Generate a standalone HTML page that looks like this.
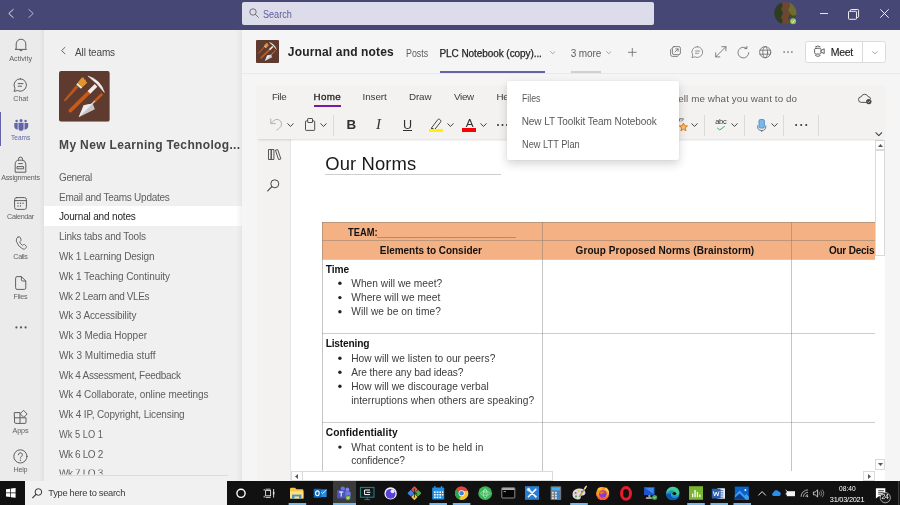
<!DOCTYPE html>
<html lang="en"><head><meta charset="utf-8"><title>Journal and notes | Microsoft Teams</title>
<style>
*{box-sizing:border-box;margin:0;padding:0}
html,body{width:900px;height:505px;overflow:hidden;background:#f5f5f5;font-family:"Liberation Sans",sans-serif}
.a{position:absolute}
.t{position:absolute;line-height:1;white-space:nowrap}
.tl{position:absolute;left:0;top:0;width:900px;height:505px;will-change:transform;pointer-events:none}
svg{position:absolute;overflow:visible}
.ic{fill:none;stroke:#5f5f5f;stroke-width:1;stroke-linecap:round;stroke-linejoin:round}
.hi .ic{stroke:#6e6e6e;stroke-width:0.85}
</style></head><body>
<svg width="0" height="0" style="display:none"><defs>
<symbol id="tools" viewBox="0 0 51 51">
<rect width="51" height="51" rx="2.2" fill="#5f3a2f"/>
<path d="M5.2 29.4 L17.4 14.6 L19.2 16.3 L6.4 30.0 Z" fill="#b9561d" stroke="#b9561d" stroke-width="1" stroke-linejoin="round"/>
<polygon points="18.68,11.83 23.58,16.39 28.56,11.66 26.88,10.46 27.00,8.90 25.20,8.54 24.96,6.86 22.92,6.62" fill="#e2932e"/>
<polygon points="22.04,17.84 23.45,16.33 18.76,11.96 17.35,13.47" fill="#f3ebe2"/>
<line x1="11.4" y1="39.8" x2="30.6" y2="21" stroke="#c45a1b" stroke-width="3.7" stroke-linecap="round"/>
<line x1="30.1" y1="21.5" x2="37.2" y2="14.4" stroke="#f3eee9" stroke-width="3.7"/>
<path d="M29.1 5.1 Q41.5 8.5 45.6 21.6 Q38.2 12 29.1 5.1 Z" fill="#f5f1ee" stroke="#f5f1ee" stroke-width="0.5" stroke-linejoin="round"/>
<line x1="36.2" y1="30" x2="42.8" y2="23.6" stroke="#c45a1b" stroke-width="2.5" stroke-linecap="round"/>
<line x1="32.8" y1="33.4" x2="36" y2="30.2" stroke="#d6d6d6" stroke-width="1.3"/>
<path d="M19.8 46.5 L24.8 34.4 L33.8 32.6 L36 38.4 Z" fill="#c6c6c6"/>
<path d="M19.8 46.5 L24.8 34.4 L33.8 32.6 Z" fill="#ececec"/>
</symbol>
<symbol id="chev" viewBox="0 0 8 5"><path d="M0.6 0.7 L4 4.1 L7.4 0.7" fill="none" stroke="#3a3a3a" stroke-width="1.15" stroke-linecap="round" stroke-linejoin="round"/></symbol>
<symbol id="chevl" viewBox="0 0 8 5"><path d="M0.6 0.7 L4 4.1 L7.4 0.7" fill="none" stroke="#7c7c7c" stroke-width="0.95" stroke-linecap="round" stroke-linejoin="round"/></symbol>
</defs></svg>

<!-- ================= TITLE BAR ================= -->
<div class="a" style="left:0;top:0;width:900px;height:30px;background:#464775"></div>
<svg style="left:7.6px;top:9.3px" width="6" height="9" viewBox="0 0 6 9"><path d="M5.2 0.5 L0.8 4.5 L5.2 8.5" fill="none" stroke="#ececf4" stroke-width="0.95" stroke-linecap="round" stroke-linejoin="round"/></svg>
<svg style="left:28.4px;top:9.3px" width="6" height="9" viewBox="0 0 6 9"><path d="M0.8 0.5 L5.2 4.5 L0.8 8.5" fill="none" stroke="#b9b9d3" stroke-width="1" stroke-linecap="round" stroke-linejoin="round"/></svg>
<div class="a" style="left:242.2px;top:2.2px;width:412.3px;height:22.6px;background:#dcdcea;border-radius:2px"></div>
<svg style="left:248.5px;top:8.3px" width="10" height="10" viewBox="0 0 10 10"><circle cx="4" cy="4" r="3.2" fill="none" stroke="#666" stroke-width="0.9"/><line x1="6.4" y1="6.4" x2="9.4" y2="9.4" stroke="#666" stroke-width="0.9" stroke-linecap="round"/></svg>
<!-- avatar -->
<svg style="left:774.3px;top:2.2px" width="23" height="23" viewBox="0 0 23 23">
<defs><clipPath id="avc"><circle cx="11.3" cy="11.1" r="11.1"/></clipPath><filter id="avb" x="-20%" y="-20%" width="140%" height="140%"><feGaussianBlur stdDeviation="0.7"/></filter></defs>
<g clip-path="url(#avc)"><g filter="url(#avb)">
<rect x="-3" y="-3" width="29" height="29" fill="#3b4527"/>
<rect x="0" y="0" width="8" height="23" fill="#2f3d22"/>
<path d="M7 0 L15 0 L16 4 L14 8 L16.5 12 L14 16 L16 20 L15 23 L7 23 L9 19 L7 15 L9.5 11 L7 7 L9 3 Z" fill="#6e4632"/>
<path d="M15 0 L23 0 L23 14 L19 15 L16.5 12 L14 8 L16 4 Z" fill="#6f6d2c"/>
<path d="M16 14 L23 13 L23 23 L15 23 L16 20 L14.5 17 Z" fill="#4a4a25"/>
</g></g>
<circle cx="19.1" cy="19.3" r="4.1" fill="#464775"/>
<circle cx="19.1" cy="19.3" r="3" fill="#92c353"/>
<path d="M17.7 19.4 L18.7 20.4 L20.6 18.3" fill="none" stroke="#fff" stroke-width="0.8"/>
</svg>
<!-- window controls -->
<div class="a" style="left:819.6px;top:12.8px;width:8px;height:1px;background:#e6e6ef"></div>
<svg style="left:847.8px;top:8.5px" width="11.2" height="11" viewBox="0 0 11.2 11"><rect x="0.5" y="2.3" width="8" height="8" rx="0.8" fill="none" stroke="#fff" stroke-width="0.9"/><path d="M2.5 2.3 V1.3 Q2.5 0.5 3.3 0.5 H9.8 Q10.6 0.5 10.6 1.3 V7.6 Q10.6 8.4 9.8 8.4 H8.6" fill="none" stroke="#fff" stroke-width="0.9"/></svg>
<svg style="left:880px;top:9.2px" width="9" height="9" viewBox="0 0 9 9"><path d="M0.3 0.3 L8.7 8.7 M8.7 0.3 L0.3 8.7" stroke="#fff" stroke-width="0.9"/></svg>

<!-- ================= RAIL ================= -->
<div class="a" style="left:0;top:30px;width:44px;height:451px;background:linear-gradient(90deg,#ebebeb 0,#ebebeb 39px,#e1e1e1 44px)"></div>
<div class="a" style="left:0;top:112px;width:1.3px;height:33.5px;background:#6264a7"></div>
<!-- bell -->
<svg style="left:14px;top:38px" width="14" height="15" viewBox="0 0 14 15"><path class="ic" d="M2.2 10.6 V6 A4.8 4.8 0 0 1 11.8 6 V10.6 L12.6 11.4 H1.4 Z"/><path class="ic" d="M5.3 11.6 A1.8 1.8 0 0 0 8.7 11.6"/></svg>
<!-- chat -->
<svg style="left:13.4px;top:78px" width="15" height="15" viewBox="0 0 15 15"><path class="ic" d="M7.6 0.8 A6.2 6.2 0 1 1 4.4 12.5 L1.1 13.4 L2 10.3 A6.2 6.2 0 0 1 7.6 0.8 Z"/><path class="ic" d="M5.2 5.6 H10 M5.2 8.2 H8.6"/></svg>
<!-- teams -->
<svg style="left:13.5px;top:118.6px" width="14.4" height="12" viewBox="0 0 14.4 12"><g fill="#6264a7"><circle cx="2.6" cy="2.05" r="1.25"/><circle cx="7.05" cy="1.6" r="1.5"/><circle cx="11.6" cy="2.05" r="1.25"/><path d="M4.5 3.7 H9.6 V9.2 A2.55 2.55 0 0 1 4.5 9.2 Z"/><path d="M0.3 4 H3.7 V10.7 Q0.3 10.1 0.3 7.2 Z"/><path d="M14.2 4 H10.5 V10.7 Q14.2 10.1 14.2 7.2 Z"/></g></svg>
<!-- assignments backpack -->
<svg style="left:13.9px;top:156.5px" width="13" height="16" viewBox="0 0 13 16"><path class="ic" d="M4.4 3.2 V2.2 A2.1 2.1 0 0 1 8.6 2.2 V3.2"/><path class="ic" d="M1.2 14.8 V7.2 A4 4 0 0 1 5.2 3.2 H7.8 A4 4 0 0 1 11.8 7.2 V14.8 Z"/><path class="ic" d="M3.4 9.6 H9.6 V11.8 H3.4 Z M4.6 6.6 H8.4"/></svg>
<!-- calendar -->
<svg style="left:14.3px;top:197px" width="13" height="13" viewBox="0 0 13 13"><rect class="ic" x="0.6" y="0.6" width="11.8" height="11.8" rx="2"/><path class="ic" d="M0.6 3.6 H12.4"/><g fill="#5f5f5f"><circle cx="4" cy="6.3" r="0.75"/><circle cx="6.5" cy="6.3" r="0.75"/><circle cx="9" cy="6.3" r="0.75"/><circle cx="4" cy="8.9" r="0.75"/><circle cx="6.5" cy="8.9" r="0.75"/></g></svg>
<!-- calls -->
<svg style="left:14.6px;top:235.6px" width="12" height="14.4" viewBox="0 0 13 15"><path class="ic" d="M3.2 0.9 L4.6 0.6 Q5.4 0.5 5.7 1.3 L6.6 3.8 Q6.8 4.5 6.2 5 L5 6 Q5.8 8.4 8 9.8 L9.3 9 Q10 8.6 10.6 9.1 L12.2 10.7 Q12.7 11.3 12.2 12 L11.4 13.2 Q10.4 14.5 8.6 13.8 Q3.4 11.6 1.4 5.2 Q0.8 2 3.2 0.9 Z"/></svg>
<!-- files -->
<svg style="left:15.2px;top:276.2px" width="11.4" height="14" viewBox="0 0 11.4 14"><path class="ic" d="M0.6 2 A1.4 1.4 0 0 1 2 0.6 H6.4 L10.8 5 V12 A1.4 1.4 0 0 1 9.4 13.4 H2 A1.4 1.4 0 0 1 0.6 12 Z"/><path class="ic" d="M6.4 0.8 V3.8 A1.2 1.2 0 0 0 7.6 5 H10.6"/></svg>
<!-- more -->
<svg style="left:15px;top:326px" width="12" height="3" viewBox="0 0 12 3"><g fill="#555"><circle cx="1.4" cy="1.4" r="1.05"/><circle cx="6" cy="1.4" r="1.05"/><circle cx="10.6" cy="1.4" r="1.05"/></g></svg>
<!-- apps -->
<svg style="left:14px;top:409.5px" width="14" height="14" viewBox="0 0 14 14"><path class="ic" d="M0.6 2.6 H6 V13.4 H1.6 A1 1 0 0 1 0.6 12.4 Z M0.6 7.8 H12 V12.4 A1 1 0 0 1 11 13.4 H6"/><path class="ic" d="M9.8 0.6 L13.2 4 L9.8 7.4 L6.4 4 Z" /></svg>
<!-- help -->
<svg style="left:12.9px;top:449.3px" width="15" height="15" viewBox="0 0 15 15"><circle class="ic" cx="7.4" cy="7.4" r="6.6"/><path class="ic" d="M5.4 5.8 A2 2 0 1 1 8.2 7.6 Q7.4 8.2 7.4 9.2"/><circle cx="7.4" cy="11.2" r="0.7" fill="#5f5f5f"/></svg>

<!-- ================= CHANNEL PANEL ================= -->
<div class="a" style="left:44px;top:30px;width:197.7px;height:451px;background:linear-gradient(90deg,#f0f0f0 0,#f0f0f0 192px,#e6e6e6 197.7px)"></div>
<div class="a" style="left:44px;top:206px;width:197.7px;height:19.5px;background:linear-gradient(90deg,#fff 0,#fff 192px,#f2f2f2 197.7px)"></div>
<svg style="left:61px;top:47.2px" width="4.4" height="7.2" viewBox="0 0 4.4 7.2"><path d="M3.9 0.4 L0.6 3.6 L3.9 6.8" fill="none" stroke="#555" stroke-width="0.9" stroke-linecap="round" stroke-linejoin="round"/></svg>
<svg style="left:58.9px;top:71px" width="50.8" height="50.8"><use href="#tools"/></svg>
<div class="a" style="left:59px;top:474.6px;width:169px;height:1px;background:#dcdcdc"></div>
<div class="a" style="left:44px;top:475.6px;width:192px;height:5.4px;background:#f0f0f0"></div>

<!-- ================= HEADER ================= -->
<div class="a" style="left:241.7px;top:30px;width:658.3px;height:43.6px;background:#f5f5f5;border-bottom:1px solid #e9e9e9"></div>
<svg style="left:256.2px;top:40px" width="23" height="23"><use href="#tools"/></svg>
<div class="a" style="left:439.5px;top:70.6px;width:105.5px;height:2.2px;background:#6264a7"></div>
<div class="a" style="left:570.8px;top:70.6px;width:30.4px;height:2.2px;background:#d0d0d0"></div>
<svg style="left:550px;top:51.4px" width="5.6" height="3.4" viewBox="0 0 8 5"><use href="#chevl"/></svg>
<svg style="left:605.8px;top:51.4px" width="5.6" height="3.4" viewBox="0 0 8 5"><use href="#chevl"/></svg>
<svg style="left:628px;top:47.8px" width="8.6" height="8.6" viewBox="0 0 8.6 8.6"><path d="M4.3 0 V8.6 M0 4.3 H8.6" stroke="#666" stroke-width="0.8"/></svg>
<!-- header icons -->
<svg class="hi" style="left:669.8px;top:46.4px" width="11" height="11" viewBox="0 0 11 11"><rect class="ic" x="2.4" y="0.6" width="8" height="8" rx="1.6"/><path class="ic" d="M1.2 2.6 Q0.6 3 0.6 3.8 V8.6 A1.8 1.8 0 0 0 2.4 10.4 H7.2 Q8 10.4 8.4 9.8"/><path class="ic" d="M5 6 L8 3 M5.8 2.9 H8.1 V5.2"/></svg>
<svg class="hi" style="left:691.4px;top:45.6px" width="13" height="13" viewBox="0 0 15 15"><path class="ic" d="M7.6 0.8 A6.2 6.2 0 1 1 4.4 12.5 L1.1 13.4 L2 10.3 A6.2 6.2 0 0 1 7.6 0.8 Z"/><path class="ic" d="M5.2 5.8 H10 M5.2 8.4 H8.6"/></svg>
<svg class="hi" style="left:714.6px;top:46.2px" width="11.6" height="11.6" viewBox="0 0 11.6 11.6"><path class="ic" d="M0.7 10.9 L10.9 0.7 M6.8 0.7 H10.9 V4.8 M0.7 6.8 V10.9 H4.8"/></svg>
<svg class="hi" style="left:736.6px;top:45.6px" width="13" height="13" viewBox="0 0 13 13"><path class="ic" d="M11.8 6.6 A5.4 5.4 0 1 1 9.6 2.2"/><path class="ic" d="M9.9 0.4 V2.6 H7.7"/></svg>
<svg class="hi" style="left:759.4px;top:45.8px" width="12.4" height="12.4" viewBox="0 0 12.4 12.4"><circle class="ic" cx="6.2" cy="6.2" r="5.6"/><ellipse class="ic" cx="6.2" cy="6.2" rx="2.4" ry="5.6"/><path class="ic" d="M1 4.2 H11.4 M1 8.2 H11.4"/></svg>
<svg class="hi" style="left:783.4px;top:51px" width="10" height="2.2" viewBox="0 0 10 2.2"><g fill="#5f5f5f"><circle cx="1.1" cy="1.1" r="0.8"/><circle cx="5" cy="1.1" r="0.8"/><circle cx="8.9" cy="1.1" r="0.8"/></g></svg>
<!-- meet -->
<div class="a" style="left:805.3px;top:40.6px;width:80.7px;height:22.3px;background:#fff;border:1px solid #dbdbdb;border-radius:2.5px"></div>
<div class="a" style="left:862.4px;top:40.6px;width:1px;height:22.3px;background:#dbdbdb"></div>
<svg style="left:813.8px;top:45.4px" width="11" height="12.2" viewBox="0 0 11 12.2"><rect class="ic" x="0.6" y="3.3" width="6.4" height="5.8" rx="1.4" stroke="#3a3a3a"/><path class="ic" d="M7.2 5.3 L10.2 3.8 V8.6 L7.2 7.1" stroke="#3a3a3a"/><path class="ic" d="M1.5 1.7 Q3.8 0 6.1 1.7 M1.5 10.7 Q3.8 12.4 6.1 10.7" stroke="#3a3a3a" stroke-width="0.85"/></svg>
<svg style="left:871.8px;top:50.6px" width="5.8" height="3.6" viewBox="0 0 8 5"><use href="#chevl"/></svg>

<!-- ================= ONENOTE ================= -->
<div class="a" style="left:256.6px;top:85.4px;width:628.8px;height:395.6px;background:#fff"></div>
<div class="a" style="left:256.6px;top:85.4px;width:628.8px;height:53.7px;background:#f3f2f1;box-shadow:0 2px 2px -1px rgba(0,0,0,.14);z-index:2"></div>
<div class="a" style="left:256.6px;top:139.1px;width:34px;height:341.9px;background:#f3f2f1;border-right:1px solid #e6e5e4"></div>
<div class="a" style="left:313.6px;top:105px;width:27px;height:2px;background:#7719aa;z-index:3"></div>
<div style="position:absolute;left:0;top:0;z-index:3">
<!-- undo -->
<svg style="left:270.3px;top:118.2px" width="13" height="12.6" viewBox="0 0 13 12.6"><path d="M0.8 1 V5.6 H5.4 M1 5.4 L3.6 2.9 A4.6 4.6 0 0 1 11.6 6 Q11.6 8.6 8.8 10.6 L6.8 12" fill="none" stroke="#b3b0ad" stroke-width="1" stroke-linecap="round" stroke-linejoin="round"/></svg>
<svg style="left:286.6px;top:122.8px" width="7" height="4.2" viewBox="0 0 8 5"><use href="#chev"/></svg>
<!-- clipboard -->
<svg style="left:304.8px;top:118.2px" width="10.2" height="13" viewBox="0 0 10.2 13"><rect x="0.5" y="2.9" width="9.2" height="9.5" rx="0.7" fill="none" stroke="#444" stroke-width="0.95"/><rect x="2.7" y="0.5" width="4.8" height="4" rx="0.5" fill="#f3f2f1" stroke="#444" stroke-width="0.95"/></svg>
<svg style="left:320.4px;top:122.8px" width="7" height="4.2" viewBox="0 0 8 5"><use href="#chev"/></svg>
<div class="a" style="left:333px;top:114.5px;width:1px;height:21px;background:#dddbd9"></div>
<!-- U underline -->
<div class="a" style="left:402.8px;top:130.3px;width:8.8px;height:0.9px;background:#323130"></div>
<!-- highlighter -->
<svg style="left:428.8px;top:117.6px" width="13.4" height="14" viewBox="0 0 13.4 14"><path d="M2.6 9.8 L8.8 1.6 Q9.6 0.8 10.6 1.4 L11.6 2.2 Q12.4 3 11.8 3.8 L5.6 11.6 L2.2 11.8 Z M2.4 10 L5.4 11.4 M2.2 11.6 L1.2 11.8" fill="none" stroke="#333" stroke-width="0.9" stroke-linejoin="round"/></svg>
<svg style="left:446.5px;top:122.8px" width="7" height="4.2" viewBox="0 0 8 5"><use href="#chev"/></svg>
<div class="a" style="left:428.6px;top:129.3px;width:14.3px;height:2.3px;background:#fff100"></div>
<!-- A red bar -->
<div class="a" style="left:462.3px;top:128px;width:14.1px;height:3.6px;background:#fb0007"></div>
<svg style="left:480.2px;top:122.8px" width="7" height="4.2" viewBox="0 0 8 5"><use href="#chev"/></svg>
<svg style="left:496.9px;top:123.6px" width="11" height="2.2" viewBox="0 0 11 2.2"><g fill="#333"><circle cx="1" cy="1.1" r="1"/><circle cx="5.5" cy="1.1" r="1"/><circle cx="10" cy="1.1" r="1"/></g></svg>
<!-- star item -->
<svg style="left:0;top:0" width="900" height="505"><path d="M679.6 121.4 V118.8 H683.6 M681 121.6 L683.4 119.2" fill="none" stroke="#555" stroke-width="0.8"/><polygon points="683.40,123.00 684.52,125.76 687.49,125.97 685.21,127.89 685.93,130.78 683.40,129.20 680.87,130.78 681.59,127.89 679.31,125.97 682.28,125.76" fill="#f9c27a" stroke="#e37c0c" stroke-width="1" stroke-linejoin="round"/></svg>
<svg style="left:690.6px;top:122.8px" width="7" height="4.2" viewBox="0 0 8 5"><use href="#chev"/></svg>
<div class="a" style="left:703.8px;top:114.5px;width:1px;height:21px;background:#dddbd9"></div>
<svg style="left:716.5px;top:125.8px" width="8" height="4.4" viewBox="0 0 8 4.4"><path d="M0.5 2.2 L2.8 3.9 L7.5 0.5" fill="none" stroke="#2da44e" stroke-width="0.9" stroke-linecap="round" stroke-linejoin="round"/></svg>
<svg style="left:731.4px;top:122.8px" width="7" height="4.2" viewBox="0 0 8 5"><use href="#chev"/></svg>
<div class="a" style="left:743.6px;top:114.5px;width:1px;height:21px;background:#dddbd9"></div>
<!-- mic -->
<svg style="left:756.6px;top:118.6px" width="9.4" height="13" viewBox="0 0 9.4 13"><rect x="2" y="0.5" width="5.4" height="8.6" rx="1.4" fill="#7db7e8" stroke="#3a86d6" stroke-width="0.8"/><path d="M0.6 6.8 V7.4 A4.1 4.1 0 0 0 8.8 7.4 V6.8 M4.7 11.6 V12.6" fill="none" stroke="#666" stroke-width="0.9" stroke-linecap="round"/></svg>
<svg style="left:771.2px;top:122.8px" width="7" height="4.2" viewBox="0 0 8 5"><use href="#chev"/></svg>
<div class="a" style="left:783.3px;top:114.5px;width:1px;height:21px;background:#dddbd9"></div>
<svg style="left:794.6px;top:123.5px" width="12.4" height="2.2" viewBox="0 0 12.4 2.2"><g fill="#333"><circle cx="1.1" cy="1.1" r="1"/><circle cx="6.2" cy="1.1" r="1"/><circle cx="11.3" cy="1.1" r="1"/></g></svg>
<div class="a" style="left:818px;top:114.5px;width:1px;height:21px;background:#dddbd9"></div>
<svg style="left:874.8px;top:131.6px" width="7.6" height="4.4" viewBox="0 0 8 5"><use href="#chev"/></svg>
<!-- cloud -->
<svg style="left:857.6px;top:94px" width="14" height="10.6" viewBox="0 0 14 10.6"><path d="M8 8.4 H3.4 A2.8 2.8 0 0 1 3.2 2.8 A3.6 3.6 0 0 1 10 2.6 A2.6 2.6 0 0 1 12.6 4.6" fill="none" stroke="#444" stroke-width="0.9" stroke-linecap="round"/><circle cx="10.8" cy="7.6" r="2.7" fill="#444"/><path d="M9.6 7.6 L10.5 8.5 L12 6.8" fill="none" stroke="#f3f2f1" stroke-width="0.7"/></svg>
</div>
<!-- left nav icons -->
<svg style="left:268px;top:149px" width="13.4" height="11" viewBox="0 0 13.4 11"><path d="M0.5 0.5 H3.2 V10.5 H0.5 Z M3.2 0.5 H5.9 V10.5 H3.2 Z M7.4 1.2 L9.7 0.6 L12.9 9.9 L10.6 10.6 Z" fill="none" stroke="#444" stroke-width="0.9" stroke-linejoin="round"/></svg>
<svg style="left:267.2px;top:179.2px" width="12.6" height="12.6" viewBox="0 0 12.6 12.6"><circle cx="7.8" cy="4.8" r="4" fill="none" stroke="#444" stroke-width="1"/><line x1="4.9" y1="7.7" x2="0.7" y2="11.9" stroke="#444" stroke-width="1.1" stroke-linecap="round"/></svg>

<!-- document -->
<div class="a" style="left:325.2px;top:173.7px;width:176px;height:1px;background:rgba(110,110,110,.34)"></div>
<div class="a" style="left:322.3px;top:222.4px;width:553px;height:248.4px;overflow:hidden">
 <div class="a" style="left:0;top:0;width:560px;height:36.9px;background:#f4b183"></div>
 <div class="a" style="left:0;top:0;width:560px;height:1px;background:rgba(110,110,110,.40)"></div>
 <div class="a" style="left:0;top:17.9px;width:560px;height:1px;background:rgba(110,110,110,.40)"></div>
 <div class="a" style="left:0;top:36.4px;width:560px;height:1px;background:rgba(110,110,110,.36)"></div>
 <div class="a" style="left:0;top:110.6px;width:560px;height:1px;background:rgba(110,110,110,.34)"></div>
 <div class="a" style="left:0;top:199.4px;width:560px;height:1px;background:rgba(110,110,110,.34)"></div>
 <div class="a" style="left:0;top:0;width:1px;height:260px;background:rgba(110,110,110,.40)"></div>
 <div class="a" style="left:220.2px;top:0;width:1px;height:260px;background:rgba(110,110,110,.40)"></div>
 <div class="a" style="left:468.6px;top:0;width:1px;height:260px;background:rgba(110,110,110,.40)"></div>
</div>
<svg style="left:0;top:0" width="900" height="505"><g fill="#222">
<circle cx="339.9" cy="283.3" r="1.7"/><circle cx="339.9" cy="297.6" r="1.7"/><circle cx="339.9" cy="311.8" r="1.7"/>
<circle cx="339.9" cy="358.3" r="1.7"/><circle cx="339.9" cy="372.2" r="1.7"/><circle cx="339.9" cy="386.2" r="1.7"/>
<circle cx="339.9" cy="447.1" r="1.7"/></g></svg>
<!-- v scrollbar -->
<div class="a" style="left:875.2px;top:139.1px;width:10.2px;height:331.6px;background:#fff"></div>
<div class="a" style="left:875.2px;top:140.4px;width:10.2px;height:9.8px;background:#fdfdfd;border:1px solid #dadada"></div>
<svg style="left:878px;top:143.6px" width="5" height="3" viewBox="0 0 5 3"><path d="M0 3 L2.5 0 L5 3 Z" fill="#555"/></svg>
<div class="a" style="left:875.2px;top:149.6px;width:10.2px;height:106.4px;background:#fff;border:1px solid #dadada"></div>
<div class="a" style="left:875.2px;top:459.4px;width:10.2px;height:10.8px;background:#fdfdfd;border:1px solid #dadada"></div>
<svg style="left:878px;top:463.4px" width="5" height="3" viewBox="0 0 5 3"><path d="M0 0 L2.5 3 L5 0 Z" fill="#555"/></svg>
<!-- h scrollbar -->
<div class="a" style="left:290.6px;top:470.7px;width:594.8px;height:10.3px;background:#fff"></div>
<div class="a" style="left:291px;top:470.7px;width:12px;height:10.3px;background:#fdfdfd;border:1px solid #dadada"></div>
<svg style="left:295.4px;top:473.6px" width="3" height="5" viewBox="0 0 3 5"><path d="M3 0 L0 2.5 L3 5 Z" fill="#555"/></svg>
<div class="a" style="left:302.4px;top:470.7px;width:251px;height:10.3px;background:#fff;border:1px solid #dadada"></div>
<div class="a" style="left:863.4px;top:470.7px;width:11.8px;height:10.3px;background:#fdfdfd;border:1px solid #dadada"></div>
<svg style="left:868px;top:473.6px" width="3" height="5" viewBox="0 0 3 5"><path d="M0 0 L3 2.5 L0 5 Z" fill="#555"/></svg>


<!-- ================= POPUP ================= -->
<div class="a" style="left:506.8px;top:80.6px;width:172.2px;height:79.2px;background:#fff;border-radius:2px;box-shadow:0 4px 10px rgba(0,0,0,.17),0 0 2px rgba(0,0,0,.08);z-index:20"></div>

<!-- ================= TASKBAR ================= -->
<div class="a" style="left:0;top:481px;width:900px;height:24px;background:#111;z-index:40"></div>
<div style="position:absolute;left:0;top:0;z-index:41">
<div class="a" style="left:25px;top:481px;width:201.7px;height:24px;background:#f1f1f1"></div>
<svg style="left:6px;top:488.2px" width="9.6" height="9.8" viewBox="0 0 9.6 9.8"><path d="M0 1.3 L4.2 0.7 V4.6 H0 Z M4.9 0.6 L9.6 0 V4.6 H4.9 Z M0 5.3 H4.2 V9.1 L0 8.5 Z M4.9 5.3 H9.6 V9.8 L4.9 9.2 Z" fill="#fff"/></svg>
<svg style="left:31.6px;top:487.6px" width="10.4" height="10.4" viewBox="0 0 10.4 10.4"><circle cx="6.4" cy="4" r="3.3" fill="none" stroke="#333" stroke-width="1"/><line x1="4" y1="6.4" x2="0.6" y2="9.8" stroke="#333" stroke-width="1.1" stroke-linecap="round"/></svg>
<svg style="left:0;top:481px" width="900" height="24" viewBox="0 481 900 24">
<!-- cortana -->
<circle cx="241" cy="493.3" r="4.1" fill="none" stroke="#fff" stroke-width="1.4"/>
<!-- task view -->
<g fill="none" stroke="#e6e6e6" stroke-width="0.9"><rect x="265.6" y="490.6" width="5" height="5.2"/><path d="M264.2 489 V490.6 M264.2 495.8 V497.6 M270.6 489.2 H265.6 M270.6 497.4 H265.6 M273.6 489 V497.6"/></g>
<rect x="272.9" y="491.8" width="1.5" height="2.6" fill="#e6e6e6"/>
<!-- active teams bg -->
<rect x="333" y="481" width="23" height="24" fill="#3b3b3b"/>
<!-- underlines -->
<g fill="#76b9ed"><rect x="288.6" y="503" width="17.6" height="2"/><rect x="333" y="503" width="23" height="2"/><rect x="429.4" y="503" width="17.6" height="2"/><rect x="452.8" y="503" width="17.6" height="2"/><rect x="570.2" y="503" width="17.6" height="2"/><rect x="687.2" y="503" width="17.6" height="2"/><rect x="710.4" y="503" width="17.6" height="2"/><rect x="733.4" y="503" width="17.6" height="2"/></g>
<!-- file explorer -->
<path d="M290 489 Q290 487.8 291.2 487.8 H295 L296.4 489.2 H302.4 Q303.4 489.2 303.4 490.2 V498.4 H290 Z" fill="#f7c646"/>
<path d="M290 491.2 H303.4 V498.4 H290 Z" fill="#ffdf7e"/>
<path d="M292 494.6 H301.4 V498.4 H292 Z" fill="#3a96dd"/>
<rect x="294.4" y="496.4" width="4.6" height="2" fill="#ffdf7e"/>
<!-- outlook -->
<rect x="318.4" y="489.4" width="8.2" height="7.6" fill="#2a8be0"/>
<path d="M318.4 489.8 L322.6 493.4 L326.6 489.8" fill="none" stroke="#dff0ff" stroke-width="0.9"/>
<rect x="313.6" y="488.8" width="7.6" height="9" rx="0.6" fill="#0f64b4"/>
<ellipse cx="317.4" cy="493.3" rx="1.8" ry="2.4" fill="none" stroke="#fff" stroke-width="1.1"/>
<!-- teams -->
<circle cx="347.4" cy="489.4" r="1.9" fill="#7b83eb"/><circle cx="342.8" cy="488.8" r="2.2" fill="#6b73e0"/>
<rect x="343.6" y="491.2" width="7" height="6.6" rx="1.6" fill="#6f78e6"/>
<rect x="337" y="490" width="8.4" height="8.4" rx="0.9" fill="#4b53bc"/>
<path d="M339 492 H343.4 M341.2 492 V496.6" stroke="#fff" stroke-width="1" fill="none"/>
<circle cx="348" cy="497.8" r="2.5" fill="#7cc04a" stroke="#3b3b3b" stroke-width="0.5"/>
<path d="M346.9 497.8 L347.7 498.7 L349.2 496.9" stroke="#fff" stroke-width="0.6" fill="none"/>
<!-- monitor app -->
<rect x="360.4" y="487.4" width="13.6" height="9.8" fill="#0c1b1e" stroke="#2e8088" stroke-width="1"/>
<path d="M364.4 499.6 H370 M367.2 497.4 V499.4" stroke="#2e8088" stroke-width="0.9"/>
<path d="M370 490 H364.6 V494.6 H370 M366.6 492.3 H370.4" fill="none" stroke="#fff" stroke-width="1"/>
<!-- purple circle -->
<circle cx="390.6" cy="493.4" r="6.2" fill="#f3f0ff"/><circle cx="390.6" cy="493.8" r="4.9" fill="#5a3fd8"/><circle cx="392.6" cy="491.2" r="2" fill="#e9e4ff"/>
<!-- git diamond -->
<g transform="translate(414.4 493.2) rotate(45)"><rect x="-5" y="-5" width="4.8" height="4.8" rx="0.7" fill="#e2504a"/><rect x="0.2" y="-5" width="4.8" height="4.8" rx="0.7" fill="#4fa84a"/><rect x="-5" y="0.2" width="4.8" height="4.8" rx="0.7" fill="#3f83e8"/><rect x="0.2" y="0.2" width="4.8" height="4.8" rx="0.7" fill="#efc63a"/></g>
<path d="M414.4 488.6 V497.6 M414.4 492.6 L417.2 494" stroke="#222" stroke-width="0.9" fill="none"/>
<!-- calendar -->
<rect x="432.2" y="487.4" width="12" height="12.2" rx="0.8" fill="#1f8fe6"/>
<rect x="434.2" y="486" width="1.4" height="2.6" fill="#1f8fe6"/><rect x="440.8" y="486" width="1.4" height="2.6" fill="#1f8fe6"/>
<g fill="#fff"><rect x="434" y="491.4" width="1.7" height="1.5"/><rect x="436.7" y="491.4" width="1.7" height="1.5"/><rect x="439.4" y="491.4" width="1.7" height="1.5"/><rect x="442" y="491.4" width="1.3" height="1.5"/><rect x="434" y="494" width="1.7" height="1.5"/><rect x="436.7" y="494" width="1.7" height="1.5"/><rect x="439.4" y="494" width="1.7" height="1.5"/><rect x="442" y="494" width="1.3" height="1.5"/><rect x="434" y="496.6" width="1.7" height="1.5"/><rect x="436.7" y="496.6" width="1.7" height="1.5"/><rect x="439.4" y="496.6" width="1.7" height="1.5"/></g>
<!-- chrome -->
<circle cx="461.6" cy="493.2" r="6.6" fill="#e0443a"/>
<path d="M461.6 493.2 L455.9 489.9 A6.6 6.6 0 0 0 459 499.3 Z" fill="#2fa350"/>
<path d="M461.6 493.2 L459 499.3 A6.6 6.6 0 0 0 467.8 490.9 L461.6 490.9 Z" fill="#f7c42c"/>
<path d="M455.9 489.9 A6.6 6.6 0 0 1 467.8 490.9 L461.6 490.9 Z" fill="#e0443a"/>
<path d="M461.6 493.2 L455.9 489.9 A6.6 6.6 0 0 0 458.9 499.2 L461.6 494.6 Z" fill="#2fa350"/>
<circle cx="461.6" cy="493.2" r="3" fill="#fff"/><circle cx="461.6" cy="493.2" r="2.3" fill="#3f82e6"/>
<!-- green atom -->
<circle cx="485.2" cy="493.2" r="6.9" fill="#3db45a"/>
<g fill="none" stroke="#a8e6b4" stroke-width="0.8"><ellipse cx="485.2" cy="493.4" rx="4.6" ry="1.9"/><ellipse cx="485.2" cy="493.4" rx="1.9" ry="4.6"/><circle cx="485.2" cy="491.4" r="1.6"/></g>
<!-- terminal -->
<rect x="501.8" y="487.8" width="13" height="10.2" rx="0.6" fill="#050505" stroke="#9a9a9a" stroke-width="0.9"/>
<rect x="502.2" y="488.2" width="12.2" height="1.7" fill="#c8c8c8"/>
<path d="M503.6 491.6 H506" stroke="#ddd" stroke-width="0.7"/>
<!-- blue tools -->
<rect x="525" y="486.2" width="14" height="13.6" fill="#2a7fd3"/>
<path d="M528.4 489.4 L535.8 496.8 M535.8 489.4 L528.4 496.8" stroke="#fff" stroke-width="1.5" stroke-linecap="round"/>
<circle cx="528.6" cy="489.6" r="1.3" fill="none" stroke="#fff" stroke-width="0.9"/><circle cx="535.6" cy="496.6" r="1" fill="#fff"/>
<!-- calculator -->
<rect x="550.6" y="486.2" width="10.6" height="13.8" rx="0.8" fill="#6c7682"/>
<rect x="551.8" y="487.4" width="8.2" height="3" fill="#3fb0f0"/>
<g fill="#d8dde2"><rect x="551.8" y="491.8" width="2" height="1.8"/><rect x="554.9" y="491.8" width="2" height="1.8"/><rect x="551.8" y="494.6" width="2" height="1.8"/><rect x="554.9" y="494.6" width="2" height="1.8"/><rect x="551.8" y="497.2" width="2" height="1.8"/><rect x="554.9" y="497.2" width="2" height="1.8"/></g>
<rect x="558" y="491.8" width="2" height="7.2" fill="#2f86d8"/>
<!-- paint -->
<path d="M572.6 496 Q571.6 490 578 488.6 Q584.6 488 585.4 492.6 Q585.6 495.6 582 495.4 Q580.4 495.6 580.8 497.4 Q580.8 499.6 577.6 499.4 Q573.4 499 572.6 496 Z" fill="#d9dde2"/>
<circle cx="575.6" cy="493" r="1.1" fill="#e2504a"/><circle cx="578.6" cy="491" r="1.1" fill="#efc63a"/><circle cx="582" cy="491.6" r="1.1" fill="#3f83e8"/><circle cx="576" cy="496.4" r="1.1" fill="#4fa84a"/>
<path d="M579.4 496.6 L585.6 487.4" stroke="#c98a3c" stroke-width="1.3" stroke-linecap="round"/><path d="M584.8 488.6 L586.2 486.4" stroke="#f1d9a0" stroke-width="1.5" stroke-linecap="round"/>
<!-- firefox -->
<circle cx="602.6" cy="493.6" r="6.5" fill="#ff9a1f"/>
<path d="M597 489.6 Q599 486.6 602 487.6 Q600.6 489 601.6 490.4 Z" fill="#ffbd3a"/>
<path d="M606 487.2 Q609.6 490 609 494.6 Q607.6 490.4 604.6 489.6 Z" fill="#ffcf4a"/>
<circle cx="602.8" cy="494" r="3.8" fill="#8a3cc8"/>
<path d="M599 492.4 Q602 490.2 605.4 492.2 Q603 492.4 602.4 494 Q600.2 494.6 599 492.4 Z" fill="#ff6a2a"/>
<path d="M596.2 494 Q597.4 500 603 500 Q608 499.6 609 495 Q606.6 498.4 602.6 498 Q598.4 497.4 596.2 494 Z" fill="#ff4f3a"/>
<!-- opera -->
<ellipse cx="626" cy="493.4" rx="4.5" ry="5.8" fill="none" stroke="#ea1b2c" stroke-width="3"/>
<!-- network pc -->
<rect x="644" y="487" width="10.6" height="8" fill="#1c56c8"/><path d="M645.2 488 L653.6 494 V488 Z" fill="#3f86ee"/>
<path d="M646.4 497.2 H652.6 L653.4 498.8 H645.6 Z" fill="#c8ccd2"/><rect x="648.4" y="495" width="2" height="2.2" fill="#9aa0a8"/>
<circle cx="654.6" cy="497.4" r="2.7" fill="#3ea84a" stroke="#111" stroke-width="0.4"/><path d="M653.4 497.4 L654.3 498.3 L655.9 496.5" stroke="#fff" stroke-width="0.6" fill="none"/>
<!-- edge -->
<circle cx="672.8" cy="493.4" r="6.7" fill="#1d8fd8"/>
<path d="M666.2 494 Q666.4 487.6 672.6 486.8 Q678.6 487 679.4 492.4 Q679.2 495.4 675.6 495.2 H671 Q672 491.8 675 492 Q673 489.6 670.2 490.6 Q666.8 492 666.2 494 Z" fill="#3ccf8e"/>
<path d="M666.2 494 Q666.4 500 672.6 500.2 Q676.6 500 678.6 497 Q675 498.8 672.4 497.4 Q670.4 496.2 671 493.8 Q668 493.4 666.2 494 Z" fill="#0c59a8"/>
<ellipse cx="674.4" cy="493.6" rx="2" ry="1.5" fill="#111"/>
<!-- green chart -->
<rect x="689" y="486.2" width="14" height="13.6" fill="#7ab52f"/>
<g fill="#fff"><rect x="692" y="493.6" width="1.3" height="3.6"/><rect x="694.4" y="490" width="1.3" height="7.2"/><rect x="696.8" y="492" width="1.3" height="5.2"/><rect x="699.2" y="494.4" width="1.3" height="2.8"/></g>
<!-- word -->
<rect x="717.4" y="488.2" width="7.6" height="10.6" rx="0.5" fill="#e8eef8"/><path d="M719.4 490.6 H723.4 M719.4 492.8 H723.4 M719.4 495 H723.4 M719.4 497.2 H723.4" stroke="#2b579a" stroke-width="0.8"/>
<rect x="711.8" y="488.8" width="8.8" height="9.6" rx="0.6" fill="#2b5fb4"/>
<path d="M713.4 491.4 L714.6 496 L716.2 492 L717.8 496 L719 491.4" fill="none" stroke="#fff" stroke-width="0.9" stroke-linejoin="round"/>
<!-- photos -->
<rect x="734.8" y="486.6" width="14" height="13.2" fill="#0b63c8"/>
<path d="M734.8 499.8 V495.6 L739.6 490.6 L744.6 495.8 L746.4 494 L748.8 496.4 V499.8 Z" fill="#3f9cf0"/>
<path d="M734.8 499.8 V497.8 L739.6 493.4 L746 499.8 Z" fill="#0a3f8c"/>
<circle cx="745.4" cy="490" r="1" fill="#fff"/>
<!-- tray -->
<path d="M758.4 495.4 L762.1 491.6 L765.8 495.4" fill="none" stroke="#fff" stroke-width="0.9"/>
<path d="M773.4 496 A2 2 0 0 1 773.6 492.2 A2.8 2.8 0 0 1 778.6 491.6 A2.3 2.3 0 0 1 779.4 496 Z" fill="#2a8ef0"/>
<rect x="786.8" y="491.2" width="8.2" height="5" fill="#f2f2f2"/><rect x="785.8" y="492.6" width="1" height="2.2" fill="#f2f2f2"/><path d="M785.6 490 L788.4 492.4" stroke="#f2f2f2" stroke-width="0.9"/>
<g fill="none" stroke="#bdbdbd" stroke-width="0.9"><path d="M801 496.8 A7 7 0 0 1 808 489.9"/><path d="M803.4 496.8 A4.6 4.6 0 0 1 808 492.3"/><path d="M805.8 496.8 A2.2 2.2 0 0 1 808 494.7"/></g><circle cx="807.4" cy="496.4" r="0.8" fill="#bdbdbd"/>
<path d="M813.4 492 H815.2 L817.6 489.8 V497 L815.2 494.8 H813.4 Z" fill="none" stroke="#e8e8e8" stroke-width="0.8" stroke-linejoin="round"/>
<g fill="none" stroke="#9a9a9a" stroke-width="0.8"><path d="M819 491.8 A2.4 2.4 0 0 1 819 495"/><path d="M820.6 490.6 A4.2 4.2 0 0 1 820.6 496.2"/><path d="M822.2 489.6 A6 6 0 0 1 822.2 497.2"/></g>
<!-- notifications -->
<path d="M875.9 488.3 H885.3 V496.3 H878.8 L875.9 498.4 Z" fill="#fff"/>
<path d="M878.2 490.6 H883.8 M878.2 492.4 H883.8 M878.2 494.2 H882" stroke="#111" stroke-width="0.7"/>
<circle cx="885.3" cy="497.7" r="5.1" fill="#1c1c1c" stroke="#d8d8d8" stroke-width="0.7"/>
<rect x="898.4" y="481" width="0.7" height="24" fill="#5a5a5a"/>
</svg>

</div>

<!-- ================= TEXT ================= -->
<div class="tl" style="z-index:10"><span class="t" style="left:9.30px;top:54.61px;font-size:7.2px;color:#616161;letter-spacing:-0.009px;">Activity</span>
<span class="t" style="left:13.30px;top:94.81px;font-size:7.2px;color:#616161;letter-spacing:-0.096px;">Chat</span>
<span class="t" style="left:11.00px;top:133.71px;font-size:7.2px;color:#6264a7;transform:scaleX(0.9069);transform-origin:0 50%;">Teams</span>
<span class="t" style="left:1.20px;top:173.91px;font-size:7.2px;color:#616161;letter-spacing:-0.236px;">Assignments</span>
<span class="t" style="left:7.00px;top:212.91px;font-size:7.2px;color:#616161;letter-spacing:-0.282px;">Calendar</span>
<span class="t" style="left:13.30px;top:253.31px;font-size:7.2px;color:#616161;letter-spacing:-0.346px;">Calls</span>
<span class="t" style="left:13.60px;top:292.51px;font-size:7.2px;color:#616161;letter-spacing:-0.297px;">Files</span>
<span class="t" style="left:12.50px;top:427.41px;font-size:7.2px;color:#616161;letter-spacing:-0.130px;">Apps</span>
<span class="t" style="left:13.50px;top:466.31px;font-size:7.2px;color:#616161;letter-spacing:-0.266px;">Help</span>
<span class="t" style="left:75.10px;top:47.64px;font-size:10px;color:#484644;letter-spacing:-0.141px;">All teams</span>
<span class="t" style="left:59.10px;top:138.84px;font-size:12px;color:#484644;font-weight:700;letter-spacing:0.341px;">My New Learning Technolog...</span>
<span class="t" style="left:59.00px;top:172.94px;font-size:10px;color:#605e5c;letter-spacing:-0.396px;">General</span>
<span class="t" style="left:59.00px;top:192.71px;font-size:10px;color:#605e5c;letter-spacing:-0.261px;">Email and Teams Updates</span>
<span class="t" style="left:59.00px;top:212.47px;font-size:10px;color:#252423;letter-spacing:-0.170px;">Journal and notes</span>
<span class="t" style="left:59.00px;top:232.25px;font-size:10px;color:#605e5c;letter-spacing:-0.181px;">Links tabs and Tools</span>
<span class="t" style="left:59.00px;top:252.02px;font-size:10px;color:#605e5c;letter-spacing:-0.152px;">Wk 1 Learning Design</span>
<span class="t" style="left:59.00px;top:271.79px;font-size:10px;color:#605e5c;letter-spacing:-0.072px;">Wk 1 Teaching Continuity</span>
<span class="t" style="left:59.00px;top:291.56px;font-size:10px;color:#605e5c;letter-spacing:-0.377px;">Wk 2 Learn and VLEs</span>
<span class="t" style="left:59.00px;top:311.32px;font-size:10px;color:#605e5c;letter-spacing:-0.116px;">Wk 3 Accessibility</span>
<span class="t" style="left:59.00px;top:331.10px;font-size:10px;color:#605e5c;letter-spacing:-0.023px;">Wk 3 Media Hopper</span>
<span class="t" style="left:59.00px;top:350.87px;font-size:10px;color:#605e5c;letter-spacing:0.055px;">Wk 3 Multimedia stuff</span>
<span class="t" style="left:59.00px;top:370.64px;font-size:10px;color:#605e5c;letter-spacing:-0.290px;">Wk 4 Assessment, Feedback</span>
<span class="t" style="left:59.00px;top:390.41px;font-size:10px;color:#605e5c;letter-spacing:-0.088px;">Wk 4 Collaborate, online meetings</span>
<span class="t" style="left:59.00px;top:410.18px;font-size:10px;color:#605e5c;letter-spacing:-0.150px;">Wk 4 IP, Copyright, Licensing</span>
<span class="t" style="left:59.00px;top:429.94px;font-size:10px;color:#605e5c;transform:scaleX(0.9291);transform-origin:0 50%;">Wk 5 LO 1</span>
<span class="t" style="left:59.00px;top:449.71px;font-size:10px;color:#605e5c;letter-spacing:-0.381px;">Wk 6 LO 2</span>
<span class="t" style="left:59.00px;top:469.49px;font-size:10px;color:#605e5c;letter-spacing:-0.381px;clip-path:inset(0 0 5px 0);">Wk 7 LO 3</span>
<span class="t" style="left:287.80px;top:46.44px;font-size:12px;color:#252423;font-weight:700;letter-spacing:0.165px;">Journal and notes</span>
<span class="t" style="left:405.60px;top:49.03px;font-size:10px;color:#605e5c;transform:scaleX(0.8874);transform-origin:0 50%;">Posts</span>
<span class="t" style="left:439.50px;top:49.14px;font-size:10px;color:#252423;letter-spacing:-0.073px;-webkit-text-stroke:0.25px #252423;">PLC Notebook (copy)...</span>
<span class="t" style="left:570.80px;top:49.14px;font-size:10px;color:#605e5c;letter-spacing:-0.145px;">3 more</span>
<span class="t" style="left:830.70px;top:47.21px;font-size:10.5px;color:#252423;letter-spacing:-0.248px;-webkit-text-stroke:0.15px #252423;">Meet</span>
<span class="t" style="left:263.30px;top:9.54px;font-size:10px;color:#5b5d9b;transform:scaleX(0.9089);transform-origin:0 50%;">Search</span>
<span class="t" style="left:271.90px;top:91.70px;font-size:9.8px;color:#3b3a39;letter-spacing:-0.366px;">File</span>
<span class="t" style="left:313.60px;top:91.70px;font-size:9.8px;color:#252423;letter-spacing:0.286px;-webkit-text-stroke:0.3px #252423;">Home</span>
<span class="t" style="left:362.50px;top:91.70px;font-size:9.8px;color:#3b3a39;letter-spacing:-0.043px;">Insert</span>
<span class="t" style="left:409.00px;top:91.70px;font-size:9.8px;color:#3b3a39;letter-spacing:-0.125px;">Draw</span>
<span class="t" style="left:454.00px;top:91.70px;font-size:9.8px;color:#3b3a39;letter-spacing:-0.321px;">View</span>
<span class="t" style="left:496.60px;top:91.70px;font-size:9.8px;color:#3b3a39;letter-spacing:-0.385px;">Help</span>
<span class="t" style="left:673.20px;top:94.30px;font-size:9.8px;color:#605e5c;letter-spacing:0.115px;">Tell me what you want to do</span>
<span class="t" style="left:346.60px;top:118.26px;font-size:13.4px;color:#323130;font-weight:700;">B</span>
<span class="t" style="left:376.00px;top:117.10px;font-size:15px;color:#323130;font-family:'Liberation Serif', serif;font-style:italic;">I</span>
<span class="t" style="left:402.90px;top:118.53px;font-size:12.6px;color:#323130;">U</span>
<span class="t" style="left:465.70px;top:117.81px;font-size:11.8px;color:#323130;">A</span>
<span class="t" style="left:715.20px;top:118.15px;font-size:7.5px;color:#323130;letter-spacing:-0.297px;">abc</span>
<span class="t" style="left:325.20px;top:155.22px;font-size:18.4px;color:#1a1a1a;letter-spacing:0.147px;">Our Norms</span>
<span class="t" style="left:347.50px;top:228.13px;font-size:10px;color:#111;font-weight:700;transform:scaleX(0.9314);transform-origin:0 50%;">TEAM:</span>
<span class="t" style="left:377.20px;top:227.73px;font-size:10px;color:#9b7b66;letter-spacing:-0.019px;">_________________________</span>
<span class="t" style="left:379.80px;top:246.03px;font-size:10px;color:#111;font-weight:700;letter-spacing:-0.038px;">Elements to Consider</span>
<span class="t" style="left:575.60px;top:246.03px;font-size:10px;color:#111;font-weight:700;letter-spacing:0.077px;">Group Proposed Norms (Brainstorm)</span>
<span class="t" style="left:828.90px;top:246.03px;font-size:10px;color:#111;font-weight:700;letter-spacing:-0.205px;clip-path:inset(-5px 14.2px -5px -5px);">Our Decision</span>
<span class="t" style="left:325.70px;top:264.57px;font-size:10.2px;color:#111;font-weight:700;letter-spacing:-0.065px;">Time</span>
<span class="t" style="left:351.30px;top:278.77px;font-size:10.2px;color:#3b3b3b;letter-spacing:0.018px;">When will we meet?</span>
<span class="t" style="left:351.30px;top:293.17px;font-size:10.2px;color:#3b3b3b;letter-spacing:0.040px;">Where will we meet</span>
<span class="t" style="left:351.30px;top:307.27px;font-size:10.2px;color:#3b3b3b;letter-spacing:0.071px;">Will we be on time?</span>
<span class="t" style="left:325.70px;top:339.17px;font-size:10.2px;color:#111;font-weight:700;letter-spacing:-0.198px;">Listening</span>
<span class="t" style="left:351.20px;top:353.77px;font-size:10.2px;color:#3b3b3b;letter-spacing:0.046px;">How will we listen to our peers?</span>
<span class="t" style="left:351.20px;top:367.67px;font-size:10.2px;color:#3b3b3b;letter-spacing:-0.067px;">Are there any bad ideas?</span>
<span class="t" style="left:351.20px;top:381.67px;font-size:10.2px;color:#3b3b3b;letter-spacing:0.037px;">How will we discourage verbal</span>
<span class="t" style="left:351.20px;top:395.97px;font-size:10.2px;color:#3b3b3b;letter-spacing:0.046px;">interruptions when others are speaking?</span>
<span class="t" style="left:325.70px;top:428.27px;font-size:10.2px;color:#111;font-weight:700;letter-spacing:0.082px;">Confidentiality</span>
<span class="t" style="left:351.20px;top:442.57px;font-size:10.2px;color:#3b3b3b;letter-spacing:0.130px;">What content is to be held in</span>
<span class="t" style="left:351.20px;top:455.97px;font-size:10.2px;color:#3b3b3b;letter-spacing:-0.115px;">confidence?</span></div>
<div class="tl" style="z-index:30"><span class="t" style="left:521.70px;top:94.13px;font-size:10px;color:#5a5856;transform:scaleX(0.8757);transform-origin:0 50%;">Files</span>
<span class="t" style="left:521.70px;top:117.33px;font-size:10px;color:#5a5856;letter-spacing:-0.074px;">New LT Toolkit Team Notebook</span>
<span class="t" style="left:521.70px;top:139.63px;font-size:10px;color:#5a5856;transform:scaleX(0.9241);transform-origin:0 50%;">New LTT Plan</span></div>
<div class="tl" style="z-index:45"><span class="t" style="left:48.30px;top:489.43px;font-size:9.3px;color:#3a3a3a;letter-spacing:-0.287px;">Type here to search</span>
<span class="t" style="left:838.80px;top:484.74px;font-size:7.4px;color:#fff;transform:scaleX(0.8973);transform-origin:0 50%;">08:40</span>
<span class="t" style="left:829.80px;top:495.74px;font-size:7.4px;color:#fff;letter-spacing:-0.244px;">31/03/2021</span></div>
<div class="tl" style="z-index:46"><span class="t" style="left:881.50px;top:494.44px;font-size:6.8px;color:#fff;letter-spacing:-0.162px;">24</span></div>
</body></html>
